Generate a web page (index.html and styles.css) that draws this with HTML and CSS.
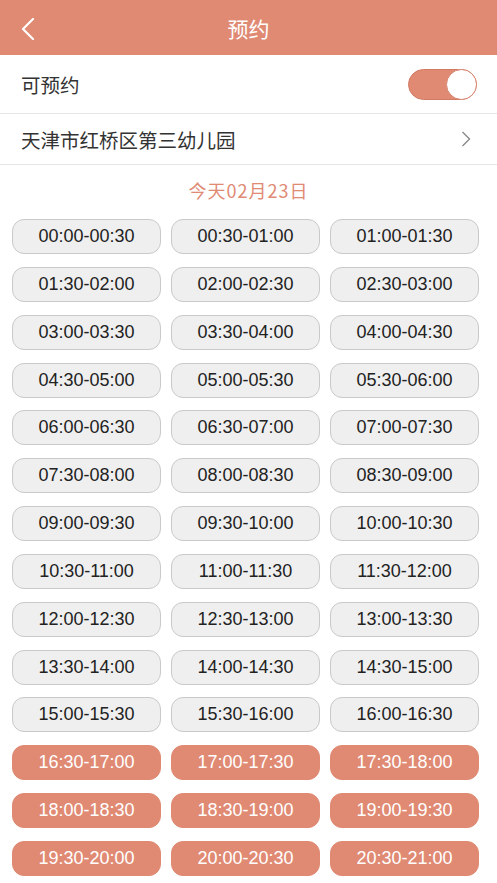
FILE: index.html
```html
<!DOCTYPE html>
<html lang="zh">
<head>
    <meta charset="UTF-8">
    <meta name="viewport" content="width=device-width, initial-scale=1.0">
    <title>预约</title>
    <link rel="stylesheet" href="styles.css">
</head>
<body>
    <div class="header">
        <a class="back">
            <svg width="14" height="22" viewBox="0 0 14 22">
                <polyline points="12,1 2,11 12,21" fill="none" stroke="#fff" stroke-width="2.2" stroke-linecap="round" stroke-linejoin="round"/>
            </svg>
        </a>
        <h1>预约</h1>
    </div>

    <div class="row row-switch">
        <span>可预约</span>
        <div class="toggle on"><div class="knob"></div></div>
    </div>
    <div class="row row-school">
        <span>天津市红桥区第三幼儿园</span>
        <svg class="chevron" width="10" height="16" viewBox="0 0 10 16">
            <polyline points="1.5,1 8.5,8 1.5,15" fill="none" stroke="#8a8a8a" stroke-width="1.4"/>
        </svg>
    </div>

    <div class="date">今天02月23日</div>

    <div class="slots" id="slots"></div>

    <script>
        // 半小时一个时段, 16:30 以后为已选
        const slots = document.getElementById('slots');
        const pad = n => (n < 10 ? '0' : '') + n;
        for (let i = 0; i < 42; i++) {
            const a = i * 30, b = a + 30;
            const text = pad(Math.floor(a / 60)) + ':' + pad(a % 60) + '-' + pad(Math.floor(b / 60)) + ':' + pad(b % 60);
            const btn = document.createElement('div');
            btn.className = 'slot' + (i >= 33 ? ' active' : '');
            btn.textContent = text;
            slots.appendChild(btn);
        }
    </script>
</body>
</html>
```

FILE: styles.css
```css
body {
    margin: 0;
    background: #fff;
    font-family: "Liberation Sans", "Noto Sans CJK SC", sans-serif;
    color: #333;
}

.header {
    height: 55px;
    background-color: #e08a74;
    display: flex;
    align-items: center;
    justify-content: center;
    position: relative;
}
.header h1 {
    margin: 0;
    font-size: 21px;
    font-weight: normal;
    color: #fff;
    font-family: "Noto Sans CJK SC", sans-serif;
}
.back {
    position: absolute;
    left: 21px;
    top: 18px;
    display: block;
    line-height: 0;
}

.row {
    display: flex;
    align-items: center;
    justify-content: space-between;
    padding: 0 22px 0 21px;
    border-bottom: 1px solid #e6e6e6;
    font-family: "Noto Sans CJK SC", sans-serif;
    font-size: 19.5px;
    color: #333;
}
.row-switch {
    height: 58px;
    padding-right: 20px;
}
.row-school {
    height: 50px;
    padding-right: 26px;
}

.toggle {
    width: 69px;
    height: 31px;
    border-radius: 16px;
    background-color: #e08a74;
    border: 1px solid #d27a64;
    box-sizing: border-box;
    display: flex;
    justify-content: flex-end;
}
.knob {
    width: 31px;
    height: 31px;
    margin: -1px;
    border-radius: 50%;
    background: #fff;
    border: 1px solid #d98670;
    box-sizing: border-box;
}

.date {
    text-align: center;
    color: #e08a74;
    font-family: "Noto Sans CJK SC", sans-serif;
    font-size: 18px;
    letter-spacing: 1px;
    line-height: 24px;
    padding-top: 13px;
}

.slots {
    display: grid;
    grid-template-columns: repeat(3, 149px);
    column-gap: 10px;
    row-gap: 12.85px;
    padding: 17px 0 0 12px;
}
.slot {
    height: 35px;
    box-sizing: border-box;
    border-radius: 12px;
    border: 1px solid #c9c9c9;
    background-color: #efefef;
    color: #222;
    font-size: 18px;
    display: flex;
    align-items: center;
    justify-content: center;
}
.slot.active {
    background-color: #e08a74;
    border-color: #e08a74;
    color: #fff;
}
```
